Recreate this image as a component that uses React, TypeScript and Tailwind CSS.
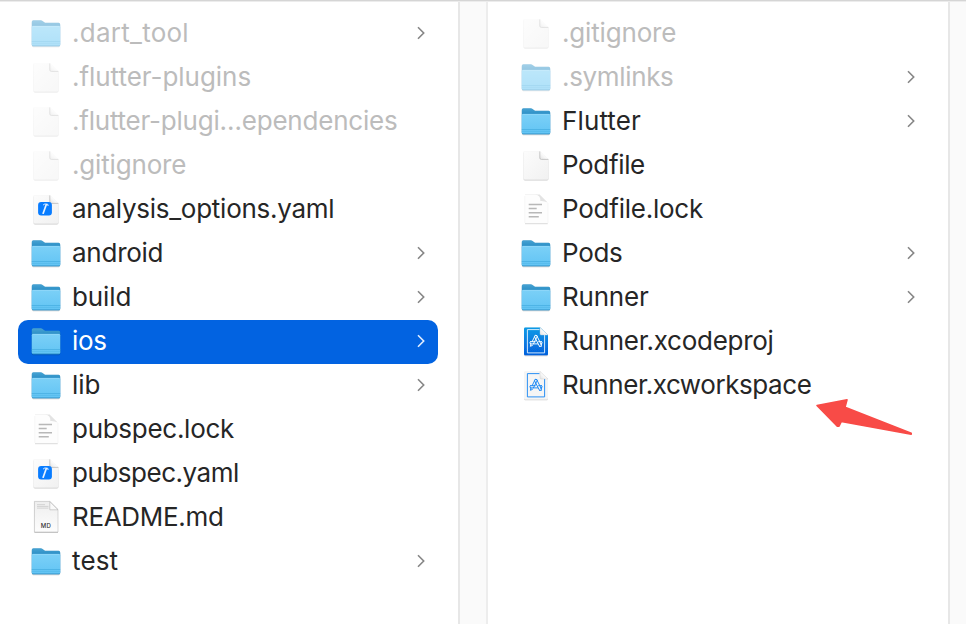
import React from "react";

type Kind = "folder" | "file" | "yaml" | "lock" | "md" | "proj" | "workspace";
type Item = { name: string; kind: Kind; dim?: boolean; selected?: boolean; spacing?: string };

const left: Item[] = [
  { name: ".dart_tool", kind: "folder", dim: true, spacing: "tracking-[0.26px]" },
  { name: ".flutter-plugins", kind: "file", dim: true, spacing: "tracking-[-0.04px]" },
  { name: ".flutter-plugi…ependencies", kind: "file", dim: true, spacing: "tracking-[-0.22px]" },
  { name: ".gitignore", kind: "file", dim: true, spacing: "tracking-[-0.17px]" },
  { name: "analysis_options.yaml", kind: "yaml", spacing: "tracking-[-0.26px]" },
  { name: "android", kind: "folder", spacing: "tracking-[-0.25px]" },
  { name: "build", kind: "folder", spacing: "tracking-[-0.1px]" },
  { name: "ios", kind: "folder", selected: true, spacing: "tracking-[-0.3px]" },
  { name: "lib", kind: "folder" },
  { name: "pubspec.lock", kind: "lock", spacing: "tracking-[-0.28px]" },
  { name: "pubspec.yaml", kind: "yaml", spacing: "tracking-[-0.48px]" },
  { name: "README.md", kind: "md", spacing: "tracking-[-0.32px]" },
  { name: "test", kind: "folder", spacing: "tracking-[0.15px]" },
];

const right: Item[] = [
  { name: ".gitignore", kind: "file", dim: true, spacing: "tracking-[-0.17px]" },
  { name: ".symlinks", kind: "folder", dim: true, spacing: "tracking-[-0.34px]" },
  { name: "Flutter", kind: "folder", spacing: "tracking-[0.12px]" },
  { name: "Podfile", kind: "file", spacing: "tracking-[-0.35px]" },
  { name: "Podfile.lock", kind: "lock", spacing: "tracking-[-0.24px]" },
  { name: "Pods", kind: "folder", spacing: "tracking-[-0.3px]" },
  { name: "Runner", kind: "folder", spacing: "tracking-[-0.2px]" },
  { name: "Runner.xcodeproj", kind: "proj", spacing: "tracking-[-0.27px]" },
  { name: "Runner.xcworkspace", kind: "workspace", spacing: "tracking-[-0.42px]" },
];

function Defs() {
  return (
    <svg width="0" height="0" className="absolute">
      <defs>
        <linearGradient id="front" x1="0" y1="0" x2="0" y2="1">
          <stop offset="0" stopColor="#7bd0f7" />
          <stop offset="1" stopColor="#62c4f4" />
        </linearGradient>
        <linearGradient id="back" x1="0" y1="0" x2="0" y2="1">
          <stop offset="0" stopColor="#48a3d3" />
          <stop offset="0.3" stopColor="#2389c2" />
        </linearGradient>
        <linearGradient id="paper" x1="0" y1="0" x2="1" y2="1">
          <stop offset="0" stopColor="#fcfcfc" />
          <stop offset="1" stopColor="#f1f1f1" />
        </linearGradient>
        <linearGradient id="mdpaper" x1="0" y1="0" x2="0" y2="1">
          <stop offset="0" stopColor="#eeeeee" />
          <stop offset="1" stopColor="#fdfdfd" />
        </linearGradient>
        <linearGradient id="blue" x1="0" y1="0" x2="0" y2="1">
          <stop offset="0" stopColor="#0c9ae6" />
          <stop offset="1" stopColor="#0560dc" />
        </linearGradient>
        <linearGradient id="fold" x1="1" y1="0" x2="0" y2="1">
          <stop offset="0.45" stopColor="#ffffff" />
          <stop offset="1" stopColor="#e2e2e2" />
        </linearGradient>
        <filter id="shade" x="-20%" y="-20%" width="140%" height="140%">
          <feDropShadow dx="0" dy="0.6" stdDeviation="0.6" floodColor="#000" floodOpacity="0.35" />
        </filter>
      </defs>
    </svg>
  );
}

const sheet = "M4.8 1.2H19.8L28.6 9.6V27.8Q28.6 29.4 27 29.4H4.8Q3.4 29.4 3.4 27.8V2.6Q3.4 1.2 4.8 1.2Z";
const slimSheet = "M5.4 1.4H20.2L28 9V28Q28 29.3 26.7 29.3H5.4Q4 29.3 4 28V2.7Q4 1.4 5.4 1.4Z";

function Corner() {
  return (
    <g>
      <path d="M19.8 1.4V8Q19.8 9.4 21.3 9.4H28.4Z" fill="url(#fold)" />
      <path d="M19.8 1.4V8Q19.8 9.4 21.3 9.4H28.4" fill="none" stroke="#b4b4b4" strokeWidth="0.7" />
    </g>
  );
}

function Glyph({ color }: { color: string }) {
  return (
    <g stroke={color} fill="none" strokeWidth="0.95" strokeLinecap="round">
      <path d="M15.2 9.4L12.2 15.6M17.4 10.2L13.4 17.9M16.6 9.4L21.2 18.4M14.6 10.9L19.5 20.3M15.2 9.4Q16 8.6 16.6 9.4" />
      <path d="M10.4 15.7H15.2M18.6 15.7H21.6M10.4 17.9H17.6M20.6 17.9H21.6" />
      <path d="M10.4 15.7Q9 16.8 10.4 17.9M21.6 15.7Q23 16.8 21.6 17.9M10.9 18.3L10.4 20.3L12.4 19.4M19.5 20.3L21.4 20.4L21.2 18.4" />
    </g>
  );
}

function Icon({ kind }: { kind: Kind }) {
  return (
    <svg viewBox="0 0 32 32" className="h-8 w-8 shrink-0 overflow-visible">
      {kind === "folder" && (
        <g>
          <g filter="url(#shade)">
            <path d="M3.4 2.2H10.8Q11.8 2.2 12.6 2.9L14.3 4.2Q15 4.8 16 4.8H28.7Q30.2 4.8 30.2 6.4V26.8Q30.2 28.2 28.8 28.2H3.3Q1.8 28.2 1.8 26.8V3.8Q1.8 2.2 3.4 2.2Z" fill="url(#back)" />
          </g>
          <path d="M3 8H29Q30.2 8 30.2 9.2V26.6Q30.2 28 28.8 28H3.3Q1.8 28 1.8 26.6V9.2Q1.8 8 3 8Z" fill="url(#front)" />
          <path d="M2.4 8.3H29.6" stroke="#9fdefa" strokeWidth="0.6" />
          <path d="M1.8 23.5H30.2" stroke="#44acdf" strokeWidth="0.7" />
          <path d="M1.8 25.4H30.2" stroke="#4db2e4" strokeWidth="0.5" />
          <path d="M2.2 27.6H29.8" stroke="#3fa0d3" strokeWidth="0.8" />
        </g>
      )}
      {(kind === "file" || kind === "yaml") && (
        <g>
          <path d={sheet} fill="url(#paper)" filter="url(#shade)" />
          <Corner />
        </g>
      )}
      {kind === "yaml" && (
        <g>
          <rect x="8.1" y="7.9" width="13.8" height="13.6" rx="3" fill="#087cff" />
          <path d="M16.2 10.8L13.2 19.2" stroke="#e8f3ff" strokeWidth="1.7" strokeLinecap="round" />
          <path d="M13.4 10.8Q14.4 9.8 15.8 10L17.8 10.3L18 11.6" stroke="#fff" strokeWidth="0.9" fill="none" strokeLinecap="round" />
        </g>
      )}
      {kind === "lock" && (
        <g>
          <path d="M4.8 0.5H19.6L27.8 8.2V29.4H4.8Z" fill="#fdfdfd" />
          <path d="M5 29.7H27.7" stroke="#cfcfcf" strokeWidth="0.8" />
          <path d="M4.7 2V29M28 9V29" stroke="#f1f1f1" strokeWidth="0.6" />
          <path d="M5 0.5H16.5" stroke="#ececec" strokeWidth="0.6" />
          <path d="M15.5 0.6Q20.5 1.2 20.4 7Q24 6.6 27.6 8.6L19.6 0.6Z" fill="#e3e3e3" />
          <path d="M8.7 10.5H22M8.7 14.5H16.7M8.7 18.7H22M8.7 22.8H18.8" stroke="#b8b8b8" strokeWidth="1.5" />
        </g>
      )}
      {kind === "md" && (
        <g>
          <path d="M4.4 -0.6H19.8L28 7.5V30H4.4Z" fill="url(#mdpaper)" filter="url(#shade)" />
          <path d="M4.4 -0.6H19.8L28 7.5V30H4.4Z" fill="none" stroke="#b0b0b0" strokeWidth="0.5" />
          <path d="M7 2.7H15M7 4.4H18.5M7 6.1H18.5" stroke="#d2d2d2" strokeWidth="1" />
          <path d="M19.8 -0.4V7.8H28Z" fill="#fafafa" stroke="#b2b2b2" strokeWidth="0.6" />
          <text x="16" y="26" textAnchor="middle" fontSize="6" fontWeight="500" letterSpacing="0.3" fontFamily="Inter" fill="#333">MD</text>
        </g>
      )}
      {(kind === "proj" || kind === "workspace") && (
        <g>
          <path d={slimSheet} fill={kind === "proj" ? "url(#blue)" : "#f5f5f5"} filter="url(#shade)" />
          <path d="M19.5 3.6H7.4V26.9H24.6V9" fill="none" stroke={kind === "proj" ? "#e8f5ff" : "#1686f4"} strokeWidth="0.9" />
          <path d="M20 1.4V8Q20 9 21.2 9H28Z" fill="url(#fold)" stroke={kind === "proj" ? "#b9cfdf" : "#cccccc"} strokeWidth="0.4" />
          <Glyph color={kind === "proj" ? "#ffffff" : "#1686f4"} />
        </g>
      )}
    </svg>
  );
}

function Row({ item }: { item: Item }) {
  const tone = item.selected ? "text-white" : item.dim ? "text-[#bcbcbc]" : "text-[#262626]";
  return (
    <li className={`flex h-11 items-center rounded-[10px] pl-3 pr-[11px] ${item.selected ? "bg-[#0263e1]" : ""}`}>
      <span className={`flex ${item.dim ? "opacity-50" : ""}`}>
        <Icon kind={item.kind} />
      </span>
      <span className={`ml-2.5 flex-1 whitespace-nowrap pb-0.5 text-[26px] leading-8 ${item.spacing ?? ""} ${tone}`}>{item.name}</span>
      {item.kind === "folder" && (
        <svg viewBox="0 0 12 16" className={`mb-0.5 h-4 w-3 ${item.selected ? "text-[#e0edff]" : "text-[#868686]"}`}>
          <path d="M3 2.3L8.7 8L3 13.7" fill="none" stroke="currentColor" strokeWidth="1.6" />
        </svg>
      )}
    </li>
  );
}

export default function App() {
  return (
    <main className="relative flex h-[624px] w-[966px] flex-col overflow-hidden bg-white font-['Inter',sans-serif]">
      <Defs />
      <div className="h-0.5 shrink-0 border-t border-[#d5d5d5] bg-[#ececec]" />
      <div className="flex flex-1">
        <ul className="w-[458px] pl-[18px] pr-5 pt-2.5">
          {left.map((i) => <Row key={i.name} item={i} />)}
        </ul>
        <div className="w-[30px] border-l-2 border-r-2 border-[#e7e7e7] border-r-[#ededed] bg-[#fafafa]" />
        <ul className="w-[460px] pl-5 pr-5 pt-2.5">
          {right.map((i) => <Row key={i.name} item={i} />)}
        </ul>
        <div className="flex-1 border-l-2 border-[#e7e7e7] bg-[#fafafa]" />
      </div>
      <svg viewBox="0 0 100 40" className="absolute left-[814px] top-[396px] h-10 w-[100px]">
        <path d="M3 9.5L33 3.7L31 11.2L97.2 37.2V38.3L27.3 25.5L25 30.2L23.3 30.3Z" fill="#f84b47" stroke="#f84b47" strokeWidth="1.6" strokeLinejoin="round" />
      </svg>
    </main>
  );
}
